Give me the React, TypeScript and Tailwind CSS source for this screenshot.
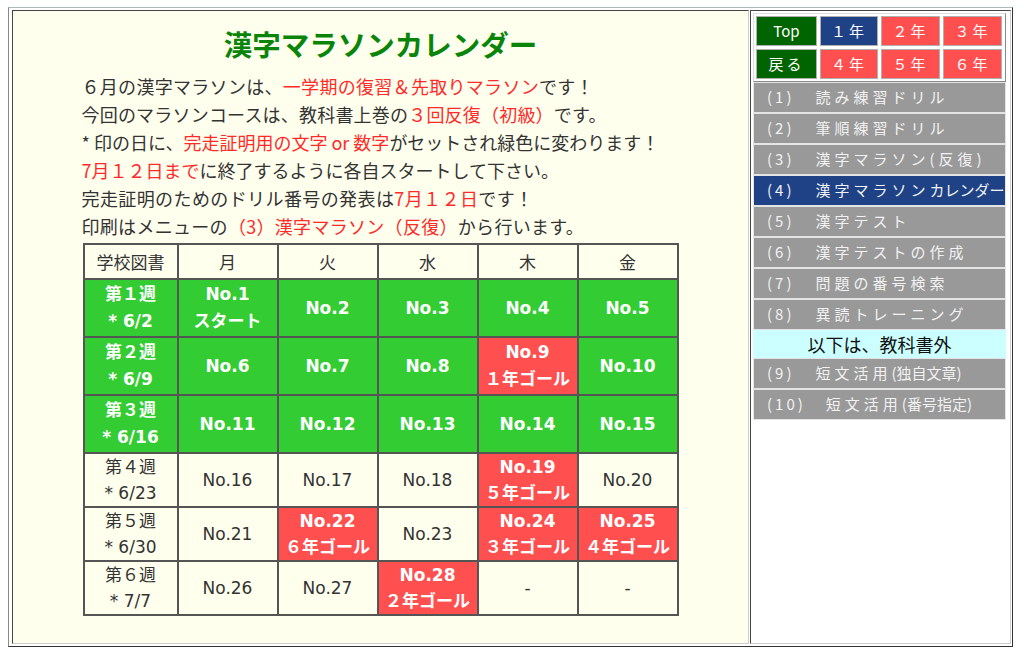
import React from 'react';

type Cell = { lines: string[]; goal?: boolean };
type Week = { label: string[]; green?: boolean; cells: Cell[] };

const weeks: Week[] = [
  {
    label: ['第１週', '* 6/2'],
    green: true,
    cells: [{ lines: ['No.1', 'スタート'] }, { lines: ['No.2'] }, { lines: ['No.3'] }, { lines: ['No.4'] }, { lines: ['No.5'] }],
  },
  {
    label: ['第２週', '* 6/9'],
    green: true,
    cells: [{ lines: ['No.6'] }, { lines: ['No.7'] }, { lines: ['No.8'] }, { lines: ['No.9', '１年ゴール'], goal: true }, { lines: ['No.10'] }],
  },
  {
    label: ['第３週', '* 6/16'],
    green: true,
    cells: [{ lines: ['No.11'] }, { lines: ['No.12'] }, { lines: ['No.13'] }, { lines: ['No.14'] }, { lines: ['No.15'] }],
  },
  {
    label: ['第４週', '* 6/23'],
    cells: [{ lines: ['No.16'] }, { lines: ['No.17'] }, { lines: ['No.18'] }, { lines: ['No.19', '５年ゴール'], goal: true }, { lines: ['No.20'] }],
  },
  {
    label: ['第５週', '* 6/30'],
    cells: [
      { lines: ['No.21'] },
      { lines: ['No.22', '６年ゴール'], goal: true },
      { lines: ['No.23'] },
      { lines: ['No.24', '３年ゴール'], goal: true },
      { lines: ['No.25', '４年ゴール'], goal: true },
    ],
  },
  {
    label: ['第６週', '* 7/7'],
    cells: [{ lines: ['No.26'] }, { lines: ['No.27'] }, { lines: ['No.28', '２年ゴール'], goal: true }, { lines: ['-'] }, { lines: ['-'] }],
  },
];

const days = ['月', '火', '水', '木', '金'];

const menu = [
  { no: '(1)', text: '読み練習ドリル' },
  { no: '(2)', text: '筆順練習ドリル' },
  { no: '(3)', text: '漢字マラソン(反復)' },
  { no: '(4)', text: '漢字マラソン', tail: 'カレンダー', active: true },
  { no: '(5)', text: '漢字テスト' },
  { no: '(6)', text: '漢字テストの作成' },
  { no: '(7)', text: '問題の番号検索' },
  { no: '(8)', text: '異読トレーニング' },
  { divider: '以下は、教科書外' },
  { no: '(9)', text: '短文活用', sub: '(独自文章)' },
  { no: '(10)', text: '短文活用', sub: '(番号指定)' },
];

const buttons = [
  { label: 'Top', bg: 'bg-[#006400]' },
  { label: '１年', bg: 'bg-[#1f4287]' },
  { label: '２年', bg: 'bg-[#ff4f4f]' },
  { label: '３年', bg: 'bg-[#ff4f4f]' },
  { label: '戻る', bg: 'bg-[#006400]' },
  { label: '４年', bg: 'bg-[#ff4f4f]' },
  { label: '５年', bg: 'bg-[#ff4f4f]' },
  { label: '６年', bg: 'bg-[#ff4f4f]' },
];

function Red({ children }: { children: React.ReactNode }) {
  return <span className="text-[#ff2b2b]">{children}</span>;
}

function Calendar() {
  return (
    <table className="w-[594px] table-fixed border-collapse border-2 border-[#555] font-['DejaVu_Sans','Noto_Sans_CJK_JP',sans-serif] text-[17px]">
      <colgroup>
        <col className="w-[94px]" />
        {days.map((d) => (
          <col key={d} className="w-[100px]" />
        ))}
      </colgroup>
      <thead>
        <tr className="h-[35px] text-[#333]">
          <th className="border-2 border-[#555] font-normal font-['Noto_Sans_CJK_JP',sans-serif]">学校図書</th>
          {days.map((d) => (
            <th key={d} className="border-2 border-[#555] font-normal font-['Noto_Sans_CJK_JP',sans-serif]">
              {d}
            </th>
          ))}
        </tr>
      </thead>
      <tbody>
        {weeks.map((w) => (
          <tr key={w.label[0]} className={w.green ? 'h-[58px] leading-[27px]' : 'h-[54px] leading-[26px]'}>
            <td
              className={`border-2 border-[#555] text-center ${
                w.green ? 'bg-[#33cc33] font-bold text-white' : 'text-[#333]'
              }`}
            >
              {w.label.map((l) => (
                <div key={l}>{l}</div>
              ))}
            </td>
            {w.cells.map((c, i) => (
              <td
                key={i}
                className={`border-2 border-[#555] text-center ${
                  c.goal
                    ? 'bg-[#ff4f4f] font-bold text-white'
                    : w.green
                      ? 'bg-[#33cc33] font-bold text-white'
                      : 'text-[#333]'
                }`}
              >
                {c.lines.map((l) => (
                  <div key={l}>{l}</div>
                ))}
              </td>
            ))}
          </tr>
        ))}
      </tbody>
    </table>
  );
}

function SideMenu() {
  return (
    <div className="flex w-[253px] flex-col">
      <div className="border border-t-[#ddd] border-l-[#ddd] border-b-[#888] border-r-[#888] p-[2px]">
        <div className="grid grid-cols-[61px_58px_59px_59px] gap-[3px]">
          {buttons.map((b) => (
            <div
              key={b.label}
              className={`flex h-[30px] items-center justify-center border border-[#b0b0b0] text-[15px] tracking-[3px] text-white ${b.bg}`}
            >
              {b.label === 'Top' ? <span className="tracking-normal">Top</span> : b.label}
            </div>
          ))}
        </div>
      </div>
      {menu.map((m) =>
        'divider' in m ? (
          <div key="div" className="flex h-[28px] items-center justify-center bg-[#ccffff] text-[18px] text-[#111]">
            {m.divider}
          </div>
        ) : (
          <div
            key={m.no}
            className={`flex h-[31px] items-center overflow-hidden whitespace-nowrap border border-[#e4e4e4] pl-[13px] text-[15px] text-[#f2f2f2] ${
              m.active ? 'bg-[#1f4287]' : 'bg-[#999999]'
            }`}
          >
            <span className="tracking-[3px]">{m.no}</span>
            <span className={`${m.no === '(10)' ? 'ml-[20px]' : 'ml-[21px]'} tracking-[4px]`}>{m.text}</span>
            {m.tail && <span>{m.tail}</span>}
            {m.sub && <span className="tracking-normal">{m.sub}</span>}
          </div>
        ),
      )}
    </div>
  );
}

export default function App() {
  return (
    <div className="min-h-[658px] bg-white pl-[8px] pt-[7px] font-['Noto_Sans_CJK_JP',sans-serif]">
      <div className="flex h-[640px] w-[1005px] gap-[1px] border border-t-[#a9bcbc] border-l-[#8a8a8a] border-b-[#333] border-r-[#333] pb-[2px] pl-[3px] pr-[1px] pt-[2px]">
        <div className="flex w-[737px] flex-col items-center border border-t-[#444] border-l-[#444] border-b-[#ccc] border-r-[#ccc] bg-[#ffffee]">
          <h1 className="mt-[15px] text-[28.5px] leading-[36px] font-bold text-[#0a850a]">漢字マラソンカレンダー</h1>
          <div className="mt-[10px] w-[598px] text-[18px] leading-[28px] text-[#333]">
            <p className="tracking-[0.3px]">
              ６月の漢字マラソンは、<Red>一学期の復習＆先取りマラソン</Red>です！
            </p>
            <p className="tracking-[0.2px]">
              今回のマラソンコースは、教科書上巻の<Red>３回反復（初級）</Red>です。
            </p>
            <p>
              * 印の日に、<Red>完走証明用の文字 or 数字</Red>がセットされ緑色に変わります！
            </p>
            <p>
              <Red>7月１２日まで</Red>に終了するように各自スタートして下さい。
            </p>
            <p className="tracking-[0.4px]">
              完走証明のためのドリル番号の発表は<Red>7月１２日</Red>です！
            </p>
            <p className="tracking-[0.3px]">
              印刷はメニューの<Red>（3）漢字マラソン（反復）</Red>から行います。
            </p>
          </div>
          <div className="mt-[3px]">
            <Calendar />
          </div>
        </div>
        <div className="flex-1 border border-t-[#444] border-l-[#444] border-b-[#ccc] border-r-[#ccc] bg-white p-[2px] pt-[2px]">
          <SideMenu />
        </div>
      </div>
    </div>
  );
}
